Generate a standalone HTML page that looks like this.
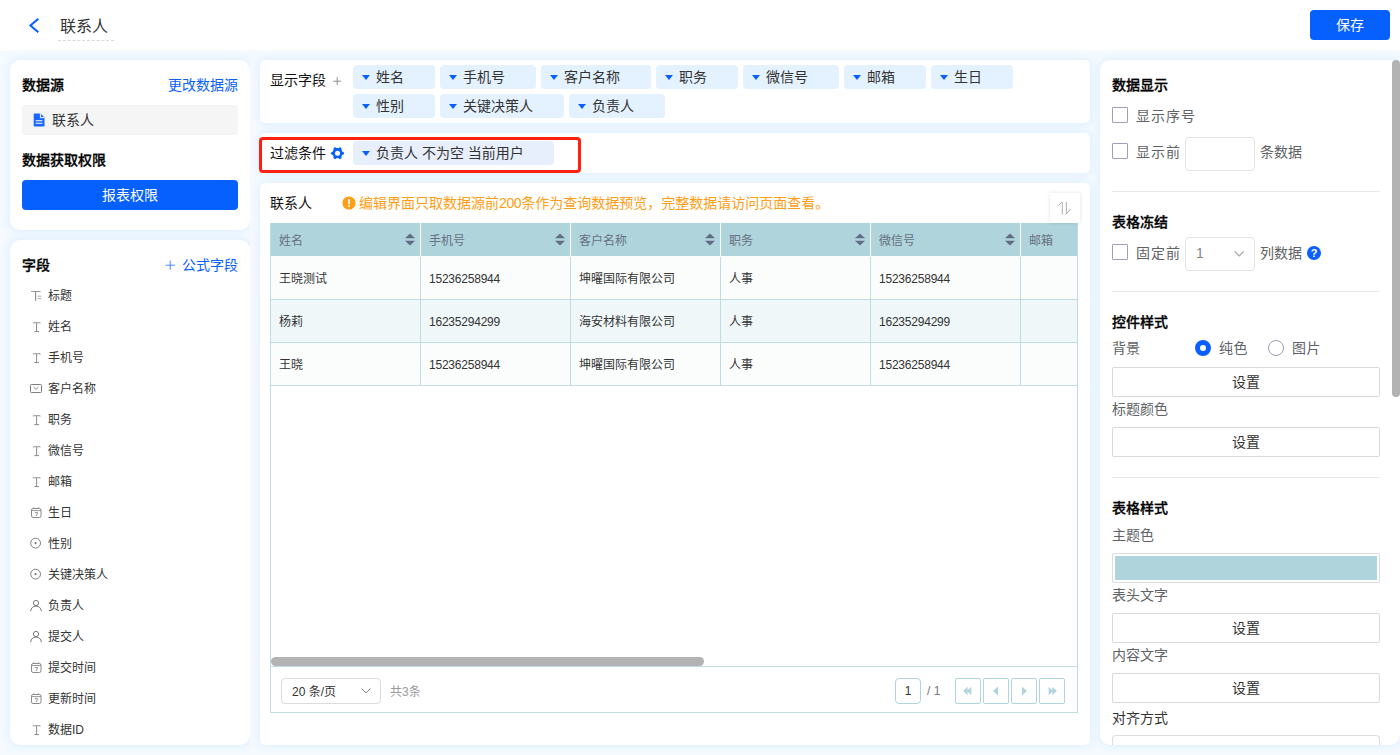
<!DOCTYPE html>
<html lang="zh-CN">
<head>
<meta charset="utf-8">
<title>联系人</title>
<style>
*{box-sizing:border-box;margin:0;padding:0}
html,body{width:1400px;height:755px;overflow:hidden}
body{background:#f5faff;font-family:"Liberation Sans","Noto Sans CJK SC",sans-serif;font-size:14px;color:#333;position:relative}
.abs{position:absolute}
.t{position:absolute;white-space:nowrap;line-height:20px;height:20px}
.b{font-weight:500;color:#000;-webkit-text-stroke:0.3px #000}
.hdr{position:absolute;left:0;top:0;width:1400px;height:50px;background:#fff}
.panel{position:absolute;background:#fff;box-shadow:0 0 10px 1px #dcedff}
.lp{clip-path:inset(-14px 0 -14px -14px)}
.btn-blue{position:absolute;background:#0560fd;color:#fff;border-radius:4px;text-align:center}
.chip{position:absolute;height:24px;border-radius:4px;background:#e4f2ff;line-height:24px;font-size:14px;color:#333;white-space:nowrap}
.chip i{position:absolute;left:9px;top:10px;width:0;height:0;border-left:4.5px solid transparent;border-right:4.5px solid transparent;border-top:5px solid #0960ff}
.chip span{position:absolute;left:23px;top:0}
.th{position:absolute;top:223px;height:33px;background:#b0d4db;color:#66707f;font-size:12px;line-height:37px;padding-left:8px;white-space:nowrap;overflow:hidden}
.td{position:absolute;height:43px;font-size:12px;line-height:45px;padding-left:8px;overflow:hidden;color:#333;white-space:nowrap;border-right:1px solid #bfdce2;border-bottom:1px solid #bfdce2}
.fld{position:absolute;left:48px;font-size:12px;line-height:16px;height:16px;color:#333;white-space:nowrap}
.ico{position:absolute}
.g{color:#606266}
.cb{position:absolute;width:16px;height:16px;border:1px solid #a0a0ba;border-radius:1px;background:#fff}
.ls{letter-spacing:1px}
.num{letter-spacing:-0.22px}
.setbtn{position:absolute;left:1112px;width:268px;height:30px;border:1px solid #d9d9d9;border-radius:2px;background:#fff;text-align:center;line-height:28px;font-size:14px;color:#333}
.hr{position:absolute;left:1112px;width:268px;height:1px;background:#e8e8e8}
.pg{position:absolute;top:678px;width:26px;height:26px;border:1px solid #b0d4db;border-radius:2px;background:#fff}
</style>
</head>
<body>
<div class="hdr"></div>
<svg class="ico" style="left:27px;top:16px" width="16" height="20" viewBox="0 0 16 20"><path d="M11.3 2.8 L3.5 9.5 L11.3 16.2" fill="none" stroke="#0960ff" stroke-width="2.1"/></svg>
<div class="abs" style="left:58px;top:12px;width:56px;height:29px;border-bottom:1px dashed #d9d9d9"></div>
<div class="t" style="left:60px;top:16px;font-size:16px;line-height:22px;height:22px;color:#333">联系人</div>
<div class="btn-blue" style="left:1310px;top:10px;width:80px;height:30px;line-height:30px;font-size:14px">保存</div>
<div class="panel lp" style="left:10px;top:60px;width:240px;height:170px;border-radius:10px"></div>
<div class="t b" style="left:22px;top:75px">数据源</div>
<div class="t" style="left:168px;top:75px;color:#0960ff">更改数据源</div>
<div class="abs" style="left:22px;top:105px;width:216px;height:30px;background:#f5f5f5;border-radius:2px"></div>
<svg class="ico" style="left:33px;top:113px" width="12" height="14" viewBox="0 0 12 14"><path d="M1.5 0.5h6l4 4v8.2a0.8 0.8 0 0 1-0.8 0.8h-9.2a0.8 0.8 0 0 1-0.8-0.8v-11.4a0.8 0.8 0 0 1 0.8-0.8z" fill="#1866ff"/><path d="M7.4 0.6v4h4" fill="none" stroke="#fff" stroke-width="1"/><path d="M2.6 7.8h6.8M2.6 10.3h6.8" stroke="#fff" stroke-width="1.1"/></svg>
<div class="t" style="left:52px;top:110px">联系人</div>
<div class="t b" style="left:22px;top:150px">数据获取权限</div>
<div class="btn-blue" style="left:22px;top:180px;width:216px;height:30px;line-height:30px;font-size:14px">报表权限</div>
<div class="panel lp" style="left:10px;top:240px;width:240px;height:505px;border-radius:10px"></div>
<div class="t b" style="left:22px;top:255px">字段</div>
<div class="t" style="left:182px;top:255px;color:#0960ff">公式字段</div>
<svg class="ico" style="left:164px;top:259px" width="12" height="12" viewBox="0 0 12 12"><path d="M6.2 1.5v9.4M1.5 6.2h9.4" stroke="#3a7bff" stroke-width="0.9"/></svg>
<svg class="ico" style="left:29px;top:289px" width="14" height="14" viewBox="0 0 14 14"><path d="M2.1 2.5h9.5" fill="none" stroke="#999" stroke-width="1"/><path d="M6.6 2.5v9.2" fill="none" stroke="#8a8a8a" stroke-width="1.1"/><path d="M8.5 7.2h3.9M8.5 9.6h3.9" fill="none" stroke="#999" stroke-width="0.8"/></svg>
<div class="fld" style="top:288px">标题</div>
<svg class="ico" style="left:29px;top:320px" width="14" height="14" viewBox="0 0 14 14"><path d="M4.3 3.5V2.7h6.8V3.5" fill="none" stroke="#999" stroke-width="1"/><path d="M7.6 2.7v8.8M5.3 11.6h4.8" fill="none" stroke="#8a8a8a" stroke-width="1"/></svg>
<div class="fld" style="top:319px">姓名</div>
<svg class="ico" style="left:29px;top:351px" width="14" height="14" viewBox="0 0 14 14"><path d="M4.3 3.5V2.7h6.8V3.5" fill="none" stroke="#999" stroke-width="1"/><path d="M7.6 2.7v8.8M5.3 11.6h4.8" fill="none" stroke="#8a8a8a" stroke-width="1"/></svg>
<div class="fld" style="top:350px">手机号</div>
<svg class="ico" style="left:29px;top:382px" width="14" height="14" viewBox="0 0 14 14"><rect x="1.5" y="2.5" width="11" height="8" rx="0.8" fill="none" stroke="#808080" stroke-width="1"/><path d="M4.7 5.2l2.3 2.1 2.3-2.1" fill="none" stroke="#808080" stroke-width="0.9"/></svg>
<div class="fld" style="top:381px">客户名称</div>
<svg class="ico" style="left:29px;top:413px" width="14" height="14" viewBox="0 0 14 14"><path d="M4.3 3.5V2.7h6.8V3.5" fill="none" stroke="#999" stroke-width="1"/><path d="M7.6 2.7v8.8M5.3 11.6h4.8" fill="none" stroke="#8a8a8a" stroke-width="1"/></svg>
<div class="fld" style="top:412px">职务</div>
<svg class="ico" style="left:29px;top:444px" width="14" height="14" viewBox="0 0 14 14"><path d="M4.3 3.5V2.7h6.8V3.5" fill="none" stroke="#999" stroke-width="1"/><path d="M7.6 2.7v8.8M5.3 11.6h4.8" fill="none" stroke="#8a8a8a" stroke-width="1"/></svg>
<div class="fld" style="top:443px">微信号</div>
<svg class="ico" style="left:29px;top:475px" width="14" height="14" viewBox="0 0 14 14"><path d="M4.3 3.5V2.7h6.8V3.5" fill="none" stroke="#999" stroke-width="1"/><path d="M7.6 2.7v8.8M5.3 11.6h4.8" fill="none" stroke="#8a8a8a" stroke-width="1"/></svg>
<div class="fld" style="top:474px">邮箱</div>
<svg class="ico" style="left:29px;top:506px" width="14" height="14" viewBox="0 0 14 14"><rect x="2.5" y="2.5" width="9.5" height="9" rx="1.6" fill="none" stroke="#8a8a8a" stroke-width="1"/><path d="M2.5 4.6h9.5" stroke="#8a8a8a" stroke-width="0.9"/><path d="M4.8 1.2v1.6M9.7 1.2v1.6" stroke="#999" stroke-width="0.9"/><path d="M5.8 6.6h2.9l-1.5 3.4" fill="none" stroke="#8a8a8a" stroke-width="0.9"/></svg>
<div class="fld" style="top:505px">生日</div>
<svg class="ico" style="left:29px;top:537px" width="14" height="14" viewBox="0 0 14 14"><circle cx="6.6" cy="6.1" r="4.9" fill="none" stroke="#808080" stroke-width="1"/><circle cx="6.6" cy="6.1" r="1.1" fill="#777"/></svg>
<div class="fld" style="top:536px">性别</div>
<svg class="ico" style="left:29px;top:568px" width="14" height="14" viewBox="0 0 14 14"><circle cx="6.6" cy="6.1" r="4.9" fill="none" stroke="#808080" stroke-width="1"/><circle cx="6.6" cy="6.1" r="1.1" fill="#777"/></svg>
<div class="fld" style="top:567px">关键决策人</div>
<svg class="ico" style="left:29px;top:599px" width="14" height="14" viewBox="0 0 14 14"><circle cx="7" cy="4" r="2.6" fill="none" stroke="#777" stroke-width="1"/><path d="M1.6 12.2C1.9 9 4.1 7.1 7 7.1s5.1 1.9 5.4 5.1" fill="none" stroke="#777" stroke-width="1"/></svg>
<div class="fld" style="top:598px">负责人</div>
<svg class="ico" style="left:29px;top:630px" width="14" height="14" viewBox="0 0 14 14"><circle cx="7" cy="4" r="2.6" fill="none" stroke="#777" stroke-width="1"/><path d="M1.6 12.2C1.9 9 4.1 7.1 7 7.1s5.1 1.9 5.4 5.1" fill="none" stroke="#777" stroke-width="1"/></svg>
<div class="fld" style="top:629px">提交人</div>
<svg class="ico" style="left:29px;top:661px" width="14" height="14" viewBox="0 0 14 14"><rect x="2.5" y="2.5" width="9.5" height="9" rx="1.6" fill="none" stroke="#8a8a8a" stroke-width="1"/><path d="M2.5 4.6h9.5" stroke="#8a8a8a" stroke-width="0.9"/><path d="M4.8 1.2v1.6M9.7 1.2v1.6" stroke="#999" stroke-width="0.9"/><path d="M5.8 6.6h2.9l-1.5 3.4" fill="none" stroke="#8a8a8a" stroke-width="0.9"/></svg>
<div class="fld" style="top:660px">提交时间</div>
<svg class="ico" style="left:29px;top:692px" width="14" height="14" viewBox="0 0 14 14"><rect x="2.5" y="2.5" width="9.5" height="9" rx="1.6" fill="none" stroke="#8a8a8a" stroke-width="1"/><path d="M2.5 4.6h9.5" stroke="#8a8a8a" stroke-width="0.9"/><path d="M4.8 1.2v1.6M9.7 1.2v1.6" stroke="#999" stroke-width="0.9"/><path d="M5.8 6.6h2.9l-1.5 3.4" fill="none" stroke="#8a8a8a" stroke-width="0.9"/></svg>
<div class="fld" style="top:691px">更新时间</div>
<svg class="ico" style="left:29px;top:723px" width="14" height="14" viewBox="0 0 14 14"><path d="M4.3 3.5V2.7h6.8V3.5" fill="none" stroke="#999" stroke-width="1"/><path d="M7.6 2.7v8.8M5.3 11.6h4.8" fill="none" stroke="#8a8a8a" stroke-width="1"/></svg>
<div class="fld" style="top:722px">数据ID</div>
<div class="panel" style="left:260px;top:60px;width:830px;height:63px;border-radius:5px"></div>
<div class="t" style="left:270px;top:70px;color:#111">显示字段</div>
<svg class="ico" style="left:331px;top:75px" width="12" height="12" viewBox="0 0 12 12"><path d="M6.2 2.2v8M2.2 6.2h8" stroke="#858585" stroke-width="0.9"/></svg>
<div class="chip" style="left:353px;top:65px;width:82px"><i></i><span>姓名</span></div>
<div class="chip" style="left:440px;top:65px;width:96px"><i></i><span>手机号</span></div>
<div class="chip" style="left:541px;top:65px;width:110px"><i></i><span>客户名称</span></div>
<div class="chip" style="left:656px;top:65px;width:82px"><i></i><span>职务</span></div>
<div class="chip" style="left:743px;top:65px;width:96px"><i></i><span>微信号</span></div>
<div class="chip" style="left:844px;top:65px;width:82px"><i></i><span>邮箱</span></div>
<div class="chip" style="left:931px;top:65px;width:82px"><i></i><span>生日</span></div>
<div class="chip" style="left:353px;top:94px;width:82px"><i></i><span>性别</span></div>
<div class="chip" style="left:440px;top:94px;width:124px"><i></i><span>关键决策人</span></div>
<div class="chip" style="left:569px;top:94px;width:96px"><i></i><span>负责人</span></div>
<div class="panel" style="left:260px;top:133px;width:830px;height:40px;border-radius:5px"></div>
<div class="t" style="left:270px;top:143px;color:#111">过滤条件</div>
<svg class="ico" style="left:330px;top:146px" width="15" height="15" viewBox="0 0 15 15"><g fill="#0960ff"><circle cx="7.5" cy="7.2" r="5.1"/><circle cx="12.50" cy="7.20" r="1.55"/><circle cx="10.00" cy="11.53" r="1.55"/><circle cx="5.00" cy="11.53" r="1.55"/><circle cx="2.50" cy="7.20" r="1.55"/><circle cx="5.00" cy="2.87" r="1.55"/><circle cx="10.00" cy="2.87" r="1.55"/></g><circle cx="7.5" cy="7.2" r="2.5" fill="#fff"/></svg>
<div class="chip" style="left:353px;top:141px;width:201px;background:#e8effc"><i></i><span>负责人 不为空 当前用户</span></div>
<div class="abs" style="left:259px;top:137px;width:322px;height:36px;border:3px solid #ff2010;border-radius:4px"></div>
<div class="panel" style="left:260px;top:183px;width:830px;height:562px;border-radius:5px"></div>
<div class="t" style="left:270px;top:193px;color:#111">联系人</div>
<svg class="ico" style="left:342px;top:196px" width="14" height="14" viewBox="0 0 14 14"><circle cx="7" cy="7" r="6.6" fill="#ff9d14"/><rect x="6.1" y="2.9" width="1.8" height="5.4" rx="0.6" fill="#fff"/><rect x="6.1" y="9.3" width="1.8" height="1.8" rx="0.6" fill="#fff"/></svg>
<div class="t" style="left:359px;top:193px;color:#ff9d14">编辑界面只取数据源前<span style="letter-spacing:-0.4px">200</span>条作为查询数据预览，完整数据请访问页面查看。</div>
<div class="abs" style="left:270px;top:223px;width:808px;height:490px;border:1px solid #bfdce2;background:#fff;overflow:hidden"></div>
<div class="th" style="left:271px;width:150px;border-right:1px solid #fff;">姓名<svg class="ico" style="right:5px;top:10px" width="10" height="13" viewBox="0 0 10 13"><path d="M5 0.5L10 5.3H0z" fill="#626c85"/><path d="M5 12.5L10 7.7H0z" fill="#626c85"/></svg></div>
<div class="th" style="left:421px;width:150px;border-right:1px solid #fff;">手机号<svg class="ico" style="right:5px;top:10px" width="10" height="13" viewBox="0 0 10 13"><path d="M5 0.5L10 5.3H0z" fill="#626c85"/><path d="M5 12.5L10 7.7H0z" fill="#626c85"/></svg></div>
<div class="th" style="left:571px;width:150px;border-right:1px solid #fff;">客户名称<svg class="ico" style="right:5px;top:10px" width="10" height="13" viewBox="0 0 10 13"><path d="M5 0.5L10 5.3H0z" fill="#626c85"/><path d="M5 12.5L10 7.7H0z" fill="#626c85"/></svg></div>
<div class="th" style="left:721px;width:150px;border-right:1px solid #fff;">职务<svg class="ico" style="right:5px;top:10px" width="10" height="13" viewBox="0 0 10 13"><path d="M5 0.5L10 5.3H0z" fill="#626c85"/><path d="M5 12.5L10 7.7H0z" fill="#626c85"/></svg></div>
<div class="th" style="left:871px;width:150px;border-right:1px solid #fff;">微信号<svg class="ico" style="right:5px;top:10px" width="10" height="13" viewBox="0 0 10 13"><path d="M5 0.5L10 5.3H0z" fill="#626c85"/><path d="M5 12.5L10 7.7H0z" fill="#626c85"/></svg></div>
<div class="th" style="left:1021px;width:56px;">邮箱</div>
<div class="abs" style="left:271px;top:256px;width:806px;height:1px;background:#fbfdfd"></div>
<div class="td" style="left:271px;top:257px;width:150px;background:#fbfdfd">王晓测试</div>
<div class="td num" style="left:421px;top:257px;width:150px;background:#fbfdfd">15236258944</div>
<div class="td" style="left:571px;top:257px;width:150px;background:#fbfdfd">坤曜国际有限公司</div>
<div class="td" style="left:721px;top:257px;width:150px;background:#fbfdfd">人事</div>
<div class="td num" style="left:871px;top:257px;width:150px;background:#fbfdfd">15236258944</div>
<div class="td" style="left:1021px;top:257px;width:56px;background:#fbfdfd;border-right:none"></div>
<div class="td" style="left:271px;top:300px;width:150px;background:#eff7f9">杨莉</div>
<div class="td num" style="left:421px;top:300px;width:150px;background:#eff7f9">16235294299</div>
<div class="td" style="left:571px;top:300px;width:150px;background:#eff7f9">海安材料有限公司</div>
<div class="td" style="left:721px;top:300px;width:150px;background:#eff7f9">人事</div>
<div class="td num" style="left:871px;top:300px;width:150px;background:#eff7f9">16235294299</div>
<div class="td" style="left:1021px;top:300px;width:56px;background:#eff7f9;border-right:none"></div>
<div class="td" style="left:271px;top:343px;width:150px;background:#fbfdfd">王晓</div>
<div class="td num" style="left:421px;top:343px;width:150px;background:#fbfdfd">15236258944</div>
<div class="td" style="left:571px;top:343px;width:150px;background:#fbfdfd">坤曜国际有限公司</div>
<div class="td" style="left:721px;top:343px;width:150px;background:#fbfdfd">人事</div>
<div class="td num" style="left:871px;top:343px;width:150px;background:#fbfdfd">15236258944</div>
<div class="td" style="left:1021px;top:343px;width:56px;background:#fbfdfd;border-right:none"></div>
<div class="abs" style="left:1050px;top:193px;width:30px;height:30px;background:#fff;box-shadow:0 0 4px rgba(0,0,0,0.12)"></div>
<svg class="ico" style="left:1057px;top:201px" width="16" height="15" viewBox="0 0 16 15"><path d="M1.4 4.6L4.7 1.4h0.6V13.6" fill="none" stroke="#adadad" stroke-width="1"/><path d="M9.3 1V13.2L13.7 7.9" fill="none" stroke="#adadad" stroke-width="1"/></svg>
<div class="abs" style="left:271px;top:657px;width:433px;height:9px;border-radius:5px;background:#b3b3b3"></div>
<div class="abs" style="left:271px;top:666px;width:806px;height:1px;background:#bfdce2"></div>
<div class="abs" style="left:281px;top:678px;width:100px;height:26px;border:1px solid #dcdcdc;border-radius:4px;background:#fff"></div>
<div class="t" style="left:292px;top:682px;font-size:12px;color:#333">20 条/页</div>
<svg class="ico" style="left:360px;top:686px" width="12" height="10" viewBox="0 0 12 10"><path d="M1.5 2.5L6 7L10.5 2.5" fill="none" stroke="#888" stroke-width="1"/></svg>
<div class="t" style="left:390px;top:682px;font-size:12px;color:#999">共3条</div>
<div class="abs" style="left:895px;top:678px;width:26px;height:26px;border:1px solid #b0d4db;border-radius:4px;background:#fff;text-align:center;line-height:24px;font-size:12px;color:#333">1</div>
<div class="t" style="left:927px;top:681px;font-size:12px;color:#777">/ 1</div>
<div class="pg" style="left:955px"><svg class="ico" style="left:-1px;top:-1px" width="26" height="26" viewBox="0 0 26 26"><path d="M12.6 8.8v8.4l-4.4-4.2zM16.3 8.8v8.4l-4.4-4.2z" fill="#b0d4db"/></svg></div>
<div class="pg" style="left:983px"><svg class="ico" style="left:-1px;top:-1px" width="26" height="26" viewBox="0 0 26 26"><path d="M15 8.5v9l-5-4.5z" fill="#b0d4db"/></svg></div>
<div class="pg" style="left:1011px"><svg class="ico" style="left:-1px;top:-1px" width="26" height="26" viewBox="0 0 26 26"><path d="M11 8.5v9l5-4.5z" fill="#b0d4db"/></svg></div>
<div class="pg" style="left:1039px"><svg class="ico" style="left:-1px;top:-1px" width="26" height="26" viewBox="0 0 26 26"><path d="M9.7 8.8v8.4l4.4-4.2zM13.4 8.8v8.4l4.4-4.2z" fill="#b0d4db"/></svg></div>
<div class="panel" style="left:1100px;top:60px;width:300px;height:685px;border-radius:10px;overflow:hidden"></div>
<div class="abs" style="left:1392px;top:60px;width:8px;height:337px;border-radius:4px;background:#b3b3b3"></div>
<div class="t b" style="left:1112px;top:75px">数据显示</div>
<div class="cb" style="left:1112px;top:107px"></div>
<div class="t g ls" style="left:1136px;top:106px">显示序号</div>
<div class="cb" style="left:1112px;top:143px"></div>
<div class="t g ls" style="left:1136px;top:142px">显示前</div>
<div class="abs" style="left:1185px;top:137px;width:70px;height:34px;border:1px solid #e4e4e8;border-radius:4px;background:#fff"></div>
<div class="t g" style="left:1260px;top:142px">条数据</div>
<div class="hr" style="top:191px"></div>
<div class="t b" style="left:1112px;top:212px">表格冻结</div>
<div class="cb" style="left:1112px;top:244px"></div>
<div class="t g ls" style="left:1136px;top:243px">固定前</div>
<div class="abs" style="left:1185px;top:237px;width:70px;height:34px;border:1px solid #e4e4e8;border-radius:4px;background:#fff"></div>
<div class="t" style="left:1196px;top:243px;color:#858585">1</div>
<svg class="ico" style="left:1233px;top:249px" width="12" height="10" viewBox="0 0 12 10"><path d="M1.6 2.4L6.2 6.9L10.8 2.4" fill="none" stroke="#a6a6a6" stroke-width="1.25"/></svg>
<div class="t g" style="left:1260px;top:243px">列数据</div>
<div class="abs" style="left:1307px;top:246px;width:14px;height:14px;border-radius:50%;background:#0960ff;color:#fff;font-size:11px;font-weight:bold;line-height:14px;text-align:center">?</div>
<div class="hr" style="top:291px"></div>
<div class="t b" style="left:1112px;top:312px">控件样式</div>
<div class="t g" style="left:1112px;top:338px">背景</div>
<div class="abs" style="left:1195px;top:340px;width:16px;height:16px;border-radius:50%;border:5px solid #0960ff;background:#fff"></div>
<div class="t g" style="left:1219px;top:338px;letter-spacing:0.4px">纯色</div>
<div class="abs" style="left:1268px;top:340px;width:16px;height:16px;border-radius:50%;border:1px solid #9c9cb4;background:#fff"></div>
<div class="t g" style="left:1292px;top:338px;letter-spacing:0.6px">图片</div>
<div class="setbtn" style="top:367px">设置</div>
<div class="t g" style="left:1112px;top:399px">标题颜色</div>
<div class="setbtn" style="top:427px">设置</div>
<div class="hr" style="top:477px"></div>
<div class="t b" style="left:1112px;top:498px">表格样式</div>
<div class="t g" style="left:1112px;top:525px">主题色</div>
<div class="abs" style="left:1112px;top:553px;width:268px;height:30px;border:1px solid #dcdcdc;border-radius:2px;background:#fff"></div>
<div class="abs" style="left:1115px;top:556px;width:262px;height:24px;background:#b0d4db"></div>
<div class="t g" style="left:1112px;top:585px">表头文字</div>
<div class="setbtn" style="top:613px">设置</div>
<div class="t g" style="left:1112px;top:645px">内容文字</div>
<div class="setbtn" style="top:673px">设置</div>
<div class="t" style="left:1112px;top:708px;color:#333">对齐方式</div>
<div class="abs" style="left:1112px;top:735px;width:268px;height:10px;border:1px solid #dcdcdc;border-bottom:none;border-radius:4px 4px 0 0;background:#fff"></div>
</body>
</html>
